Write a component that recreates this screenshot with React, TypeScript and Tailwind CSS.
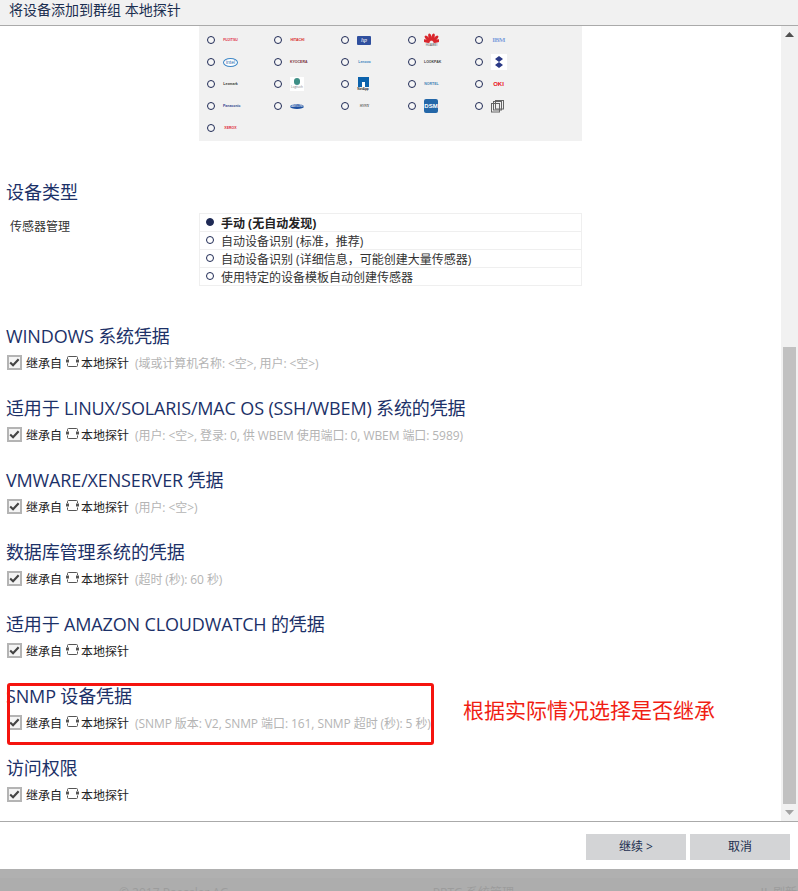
import React from "react";

const cjk = "font-['Open_Sans','Noto_Sans_CJK_SC',sans-serif]";

function Radio({ on = false }: { on?: boolean }) {
  return (
    <span
      className={`block w-[8px] h-[8px] rounded-full border border-[#1f2a55] shrink-0 ${on ? "bg-[#1f2a55]" : "bg-white/40"}`}
    />
  );
}

function Huawei() {
  const petals = [-75, -45, -15, 15, 45, 75];
  return (
    <span className="flex flex-col items-center w-[15px]">
      <svg width="15" height="11" viewBox="0 0 15 11">
        {petals.map((r) => (
          <ellipse key={r} cx="7.5" cy="4" rx="1.6" ry="3.8" fill="#d9262c" transform={`rotate(${r} 7.5 9.5)`} />
        ))}
      </svg>
      <span className="text-[3px] leading-[3px] text-[#333]">HUAWEI</span>
    </span>
  );
}

function Word({ t, c, bold = false, serif = false }: { t: string; c: string; bold?: boolean; serif?: boolean }) {
  return (
    <span
      className={`block w-[15px] text-center text-[3.5px] leading-[6px] whitespace-nowrap ${bold ? "font-bold" : ""} ${serif ? "font-['Liberation_Serif',serif]" : "font-['Liberation_Sans',sans-serif]"}`}
      style={{ color: c }}
    >
      {t}
    </span>
  );
}

const vendors: React.ReactNode[] = [
  <Word t="FUJITSU" c="#e0304a" bold />,
  <Word t="HITACHI" c="#d81e1e" bold />,
  <span className="flex items-center justify-center w-[14px] h-[9px] bg-[#2f4f9e] rounded-[1px] text-[6px] leading-none italic text-white font-['Liberation_Serif',serif]">hp</span>,
  <Huawei />,
  <span className="block w-[15px] text-center text-[7px] leading-[8px] font-bold tracking-[-0.5px] text-[#7f9fdc] font-['Liberation_Serif',serif]">IBM</span>,

  <span className="flex items-center justify-center w-[15px] h-[9px] rounded-[50%] border border-[#3d86c6] bg-white text-[5px] leading-none text-[#2d6fb0] font-['Liberation_Sans',sans-serif]">intel</span>,
  <Word t="KYOCERA" c="#77303a" bold />,
  <Word t="Lenovo" c="#3a7fc0" bold />,
  <Word t="LOOKPAK" c="#444444" bold />,
  <span className="flex items-center justify-center w-[16px] h-[16px] bg-white">
    <svg width="8" height="12" viewBox="0 0 8 12">
      <path d="M4 0 L8 3 L4 6 L8 9 L4 12 L0 9 L4 6 L0 3 Z" fill="#2b3a86" />
    </svg>
  </span>,

  <Word t="Lexmark" c="#333333" bold />,
  <span className="flex flex-col items-center w-[14px] h-[14px] bg-white">
    <span className="block w-[6px] h-[7px] mt-[1px] rounded-full bg-[#3f8f86]" />
    <span className="text-[3px] leading-[4px] text-[#777]">Logitech</span>
  </span>,
  <span className="flex flex-col items-center w-[12px]">
    <span className="flex items-end justify-center w-[11px] h-[10px] bg-[#0b62ac]">
      <span className="block w-[3px] h-[5px] bg-white" />
    </span>
    <span className="text-[3px] leading-[4px] font-bold text-[#333]">NetApp</span>
  </span>,
  <Word t="NORTEL" c="#3f7fb5" bold />,
  <span className="block w-[15px] text-center text-[6px] leading-[7px] font-bold text-[#e8101a] font-['Liberation_Sans',sans-serif]">OKI</span>,

  <Word t="Panasonic" c="#2d3f8f" bold />,
  <span className="flex items-center justify-center w-[14px] h-[5px] rounded-[50%] bg-[#1c4fa0] text-[3px] leading-none text-white">SAMSUNG</span>,
  <Word t="SONY" c="#555555" bold serif />,
  <span className="flex items-center justify-center w-[14px] h-[14px] rounded-[2px] bg-[#2467a8] text-[6px] leading-none font-bold text-white font-['Liberation_Sans',sans-serif]">DSM</span>,
  <svg width="13" height="13" viewBox="0 0 13 13" fill="none" stroke="#666" strokeWidth="1">
    <rect x="0.5" y="3.5" width="8" height="8.5" />
    <rect x="2.5" y="1.5" width="8" height="8.5" />
    <rect x="4.5" y="0.5" width="8" height="8.5" />
  </svg>,

  <Word t="XEROX" c="#e0283a" bold />,
];

function VendorGrid() {
  return (
    <div className="ml-[199px] w-[383px] h-[115px] bg-[#f1f1f1] pl-[8px] pt-[3px] grid grid-cols-[repeat(5,67px)] auto-rows-[22px]">
      {vendors.map((logo, i) => (
        <div key={i} className="flex items-center">
          <Radio />
          <span className="ml-[8px] flex items-center justify-start w-[20px]">{logo}</span>
        </div>
      ))}
    </div>
  );
}

function ProbeIcon() {
  return (
    <svg width="13" height="13" viewBox="0 0 13 13" fill="none" stroke="#555" strokeWidth="1" className="shrink-0 -mt-[6px]">
      <path d="M1.5 4 V2.5 Q1.5 1.5 2.5 1.5 H10.5 Q11.5 1.5 11.5 2.5 V4" />
      <path d="M1.5 8.5 V10.5 Q1.5 11.5 2.5 11.5 H10.5 Q11.5 11.5 11.5 10.5 V8.5" />
      <rect x="0.5" y="5" width="2" height="2" />
      <rect x="10.5" y="5" width="2" height="2" />
    </svg>
  );
}

function Check() {
  return (
    <span className="flex items-center justify-center w-[15px] h-[15px] self-start -mt-[1px] border-2 border-[#b4b4b4] bg-[#f4f4f4] shrink-0">
      <svg width="11" height="9" viewBox="0 0 12 10" fill="none" stroke="#444" strokeWidth="2.4">
        <path d="M1.2 5 L4.4 8 L10.6 1.4" />
      </svg>
    </span>
  );
}

function Section({ title, note }: { title: string; note?: string }) {
  return (
    <section className="h-[72px] pl-[6px]">
      <h3 className="text-[18px] leading-[24px] tracking-[-0.15px] text-[#1c3168] whitespace-nowrap">{title}</h3>
      <div className="mt-[8px] ml-[1px] flex items-center text-[12px] leading-[16px] whitespace-nowrap">
        <Check />
        <span className="ml-[4px] text-[#222]">继承自</span>
        <span className="ml-[4px] flex">
          <ProbeIcon />
        </span>
        <span className="ml-[2px] text-[#222]">本地探针</span>
        {note && <span className="ml-[6px] tracking-[-0.08px] text-[#b4b4b4]">{note}</span>}
      </div>
    </section>
  );
}

const sensorOptions = [
  "手动 (无自动发现)",
  "自动设备识别 (标准，推荐)",
  "自动设备识别 (详细信息，可能创建大量传感器)",
  "使用特定的设备模板自动创建传感器",
];

const sections = [
  { title: "WINDOWS 系统凭据", note: "(域或计算机名称: <空>, 用户: <空>)" },
  { title: "适用于 LINUX/SOLARIS/MAC OS (SSH/WBEM) 系统的凭据", note: "(用户: <空>, 登录: 0, 供 WBEM 使用端口: 0, WBEM 端口: 5989)" },
  { title: "VMWARE/XENSERVER 凭据", note: "(用户: <空>)" },
  { title: "数据库管理系统的凭据", note: "(超时 (秒): 60 秒)" },
  { title: "适用于 AMAZON CLOUDWATCH 的凭据" },
  { title: "SNMP 设备凭据", note: "(SNMP 版本: V2, SNMP 端口: 161, SNMP 超时 (秒): 5 秒)" },
  { title: "访问权限" },
];

export default function App() {
  return (
    <div className={`relative w-[798px] h-[891px] flex flex-col overflow-hidden bg-white ${cjk}`}>
      <header className="h-[26px] shrink-0 bg-[#f1f1f1] border-b border-[#aaaaaa] pl-[9px] text-[14px] leading-[20px] text-[#1c2f50]">
        将设备添加到群组 本地探针
      </header>

      <div className="relative flex h-[796px] shrink-0 border-b border-[#aaaaaa]">
        <main className="flex-1 min-w-0">
          <VendorGrid />

          <section className="mt-[39px] pl-[6px]">
            <h3 className="text-[18px] leading-[24px] text-[#1c3168]">设备类型</h3>
            <div className="mt-[9px] flex">
              <label className="w-[193px] pl-[4px] pt-[6px] text-[12px] leading-[16px] text-[#333]">传感器管理</label>
              <div className="w-[383px] border border-[#efefef] text-[12px]">
                {sensorOptions.map((o, i) => (
                  <div
                    key={o}
                    className={`flex items-center pl-[6px] pt-[2px] gap-[7px] ${i > 0 ? "h-[18px] border-t border-[#efefef] text-[#333]" : "h-[17px] font-bold text-[#222]"}`}
                  >
                    <span className="-mt-[4px]">
                      <Radio on={i === 0} />
                    </span>
                    {o}
                  </div>
                ))}
              </div>
            </div>
          </section>

          <div className="mt-[38px]">
            {sections.map((s) => (
              <Section key={s.title} title={s.title} note={s.note} />
            ))}
          </div>
        </main>

        <aside className="w-[17px] shrink-0 bg-[#f1f1f1] flex flex-col items-center">
          <svg width="9" height="5" viewBox="0 0 9 5" className="mt-[6px] shrink-0">
            <path d="M4.5 0 L9 5 H0 Z" fill="#505050" />
          </svg>
          <div className="w-[13px] h-[457px] mt-[310px] bg-[#c1c1c1]" />
          <svg width="9" height="5" viewBox="0 0 9 5" className="mt-[6px] shrink-0">
            <path d="M0 0 H9 L4.5 5 Z" fill="#a3a3a3" />
          </svg>
        </aside>

        <div className="absolute left-[7px] top-[657px] w-[427px] h-[62px] border-[3px] border-[#f5140f] rounded-[3px]" />
        <span className="absolute left-[463px] top-[670px] text-[21px] leading-[28px] text-[#f01e14] whitespace-nowrap">
          根据实际情况选择是否继承
        </span>
      </div>

      <footer className="h-[47px] shrink-0 flex justify-end items-start gap-[4px] pt-[12px] pr-[8px]">
        <button className="w-[100px] h-[26px] bg-[#d3d4d6] text-[12px] text-[#1c2f50]">继续 &gt;</button>
        <button className="w-[100px] h-[26px] bg-[#d3d4d6] text-[12px] text-[#1c2f50]">取消</button>
      </footer>

      <div className="flex-1 bg-[#adadad] border-t-[9px] border-[#b0b0b0] flex text-[12px] leading-[14px] text-[#9c9c9c] whitespace-nowrap">
        <span className="ml-[119px] mt-[8px]">© 2017 Paessler AG</span>
        <span className="ml-[204px] mt-[8px]">PRTG 系统管理</span>
        <span className="ml-[244px] mt-[8px]">Ⅱ 刷新 20</span>
      </div>
    </div>
  );
}
